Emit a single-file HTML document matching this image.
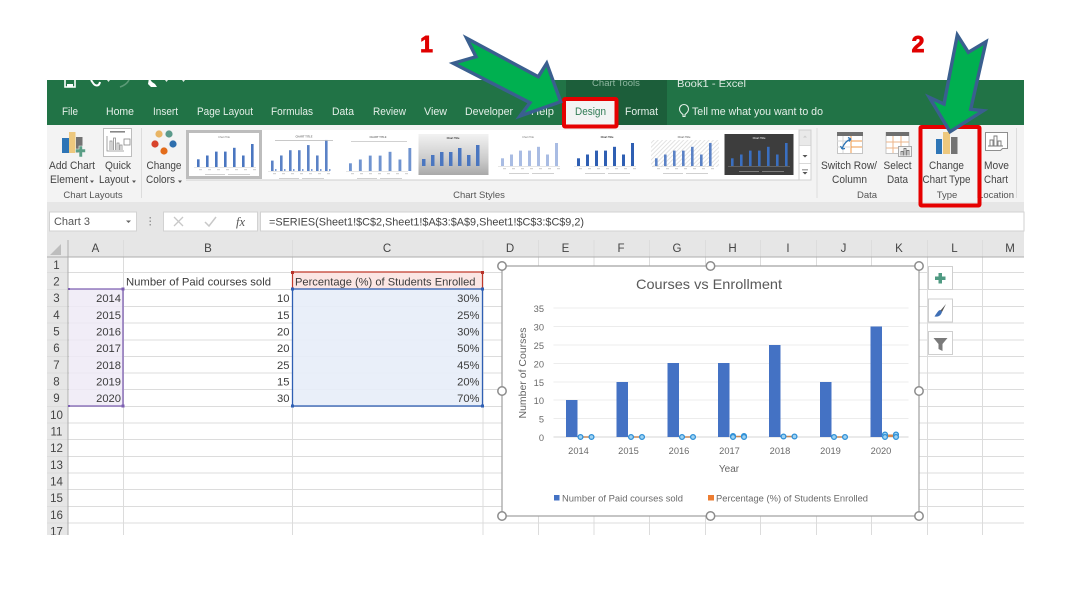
<!DOCTYPE html>
<html><head><meta charset="utf-8"><style>
html,body{margin:0;padding:0;background:#fff;width:1070px;height:593px;overflow:hidden}
svg{display:block;filter:blur(.35px)}
text{font-family:"Liberation Sans",sans-serif;fill:#444}
.t{font-size:11px;fill:#e4efe8}
.r{font-size:10.8px;fill:#444;text-anchor:middle}
.g{font-size:9.5px;fill:#555;text-anchor:middle}
.c{font-size:11.2px;fill:#3c3c3c}
.e{font-size:11.2px;fill:#3c3c3c;text-anchor:end}
.h{font-size:11.5px;fill:#444;text-anchor:middle}
.a{font-size:9.3px;fill:#6a6a6a;text-anchor:middle}
.ae{font-size:9.3px;fill:#6a6a6a;text-anchor:end}
.tiny{font-size:2.6px;fill:#777;text-anchor:middle}
</style></head><body>
<svg width="1070" height="593" viewBox="0 0 1070 593" xmlns="http://www.w3.org/2000/svg">
<defs>
<g id="b"><rect x="0" y="-7.7" width="2.6" height="7.7"/><rect x="9" y="-11.5" width="2.6" height="11.5"/><rect x="18" y="-15.4" width="2.6" height="15.4"/><rect x="27" y="-15.4" width="2.6" height="15.4"/><rect x="36" y="-19.2" width="2.6" height="19.2"/><rect x="45" y="-11.5" width="2.6" height="11.5"/><rect x="54" y="-23" width="2.6" height="23"/></g>
<g id="ln"><rect x="-3" y="0" width="62" height=".5" fill="#ccc"/><rect x="2" y="2.5" width="3" height=".6" fill="#aaa"/><rect x="11" y="2.5" width="3" height=".6" fill="#aaa"/><rect x="20" y="2.5" width="3" height=".6" fill="#aaa"/><rect x="29" y="2.5" width="3" height=".6" fill="#aaa"/><rect x="38" y="2.5" width="3" height=".6" fill="#aaa"/><rect x="47" y="2.5" width="3" height=".6" fill="#aaa"/><rect x="56" y="2.5" width="3" height=".6" fill="#aaa"/><rect x="8" y="7" width="20" height=".7" fill="#bbb"/><rect x="31" y="7" width="22" height=".7" fill="#bbb"/></g>
<pattern id="hat" width="3" height="3" patternUnits="userSpaceOnUse" patternTransform="rotate(45)"><rect width="3" height="3" fill="#fff"/><rect width="1" height="3" fill="#e2e2e2"/></pattern>
<linearGradient id="gy" x1="0" y1="0" x2="0" y2="1"><stop offset="0" stop-color="#f2f2f2"/><stop offset=".65" stop-color="#c9c9c9"/><stop offset="1" stop-color="#a9a9a9"/></linearGradient>
<clipPath id="top"><rect x="47" y="80" width="977" height="45"/></clipPath>
</defs>

<!-- title/tab band -->
<rect x="47" y="80" width="977" height="45" fill="#217346"/>
<rect x="566" y="80" width="101" height="45" fill="#1c5e3a"/>
<g clip-path="url(#top)">
<text x="616" y="86" font-size="9.5" text-anchor="middle" style="fill:#8fb7a0">Chart Tools</text>
<text x="677" y="87" font-size="10.5" style="fill:#dfeae3" textLength="69" lengthAdjust="spacingAndGlyphs">Book1  -  Excel</text>
<!-- QAT -->
<path d="M65 78h10v9h-10z" fill="none" stroke="#fff" stroke-width="1.6"/><rect x="67" y="84" width="6" height="3" fill="#fff"/>
<path d="M91 80l2 3c2 3 6 4 7-1" fill="none" stroke="#fff" stroke-width="2"/>
<path d="M120 87c3-1 7-3 9-7" fill="none" stroke="#5c9a77" stroke-width="1.6"/>
<path d="M149 78l3 4 3 2 2 3h-6l-3-3z" fill="#fff"/>
<path d="M107 80h3l-1.500 2zM165 80h3l-1.500 2zM185 80h-3l1.500 2z" fill="#dfeae3"/>
</g>
<!-- tabs -->
<text class="t" x="62" y="115" textLength="16" lengthAdjust="spacingAndGlyphs">File</text>
<text class="t" x="106" y="115" textLength="28" lengthAdjust="spacingAndGlyphs">Home</text>
<text class="t" x="153" y="115" textLength="25" lengthAdjust="spacingAndGlyphs">Insert</text>
<text class="t" x="197" y="115" textLength="56" lengthAdjust="spacingAndGlyphs">Page Layout</text>
<text class="t" x="271" y="115" textLength="42" lengthAdjust="spacingAndGlyphs">Formulas</text>
<text class="t" x="332" y="115" textLength="22" lengthAdjust="spacingAndGlyphs">Data</text>
<text class="t" x="373" y="115" textLength="33" lengthAdjust="spacingAndGlyphs">Review</text>
<text class="t" x="424" y="115" textLength="23" lengthAdjust="spacingAndGlyphs">View</text>
<text class="t" x="465" y="115" textLength="48" lengthAdjust="spacingAndGlyphs">Developer</text>
<text class="t" x="531" y="115" textLength="23" lengthAdjust="spacingAndGlyphs">Help</text>
<rect x="564" y="99" width="52" height="27" fill="#f3f3f3"/>
<text x="575" y="115" font-size="11" style="fill:#2f7a53" textLength="31" lengthAdjust="spacingAndGlyphs">Design</text>
<text class="t" x="625" y="115" textLength="33" lengthAdjust="spacingAndGlyphs">Format</text>
<path d="M683 116.500v-2c-2-1.500-3.500-3-3.500-5.500a4.500 4.500 0 0 1 9 0c0 2.500-1.500 4-3.500 5.500v2z" fill="none" stroke="#e4efe8" stroke-width="1.100"/>
<text class="t" x="692" y="115" textLength="131" lengthAdjust="spacingAndGlyphs">Tell me what you want to do</text>

<!-- ribbon -->
<rect x="47" y="125" width="977" height="77" fill="#f3f3f3"/>
<rect x="47" y="202" width="977" height="38" fill="#e6e6e6"/>
<rect x="141" y="128" width="1" height="70" fill="#dcdcdc"/>
<rect x="816.500" y="128" width="1" height="70" fill="#dcdcdc"/>
<rect x="977" y="128" width="1" height="70" fill="#dcdcdc"/>
<rect x="1016" y="128" width="1" height="70" fill="#dcdcdc"/>

<!-- add chart -->
<rect x="62" y="138" width="7" height="15" fill="#2e75b6"/><rect x="69" y="132" width="6.500" height="21" fill="#edc87e"/><rect x="76" y="137" width="6.500" height="16" fill="#737373"/>
<path d="M79 146h3.500v3h3v3.500h-3v4.500h-3.500v-4.500h-3.500v-3.500h3.500z" fill="#5a9e86" stroke="#f3f3f3" stroke-width=".6"/>
<text class="r" x="72" y="169" textLength="46" lengthAdjust="spacingAndGlyphs">Add Chart</text><text class="r" x="69" y="183" textLength="38" lengthAdjust="spacingAndGlyphs">Element</text><path d="M90 180.500h4l-2 2.500z" fill="#555"/>
<!-- quick layout -->
<rect x="103.500" y="128.500" width="28" height="28" fill="#fff" stroke="#bdbdbd"/>
<rect x="110" y="131" width="15" height="1.600" fill="#888"/>
<path d="M107 136v15h17M110 150v-9h2v9M113.500 150v-12h2v12M117 150v-7h2v7M120 150v-5h2v5" fill="none" stroke="#8c8c8c" stroke-width=".8"/>
<rect x="124" y="139" width="6" height="6" fill="#fff" stroke="#888" stroke-width=".8"/>
<text class="r" x="118" y="169" textLength="26" lengthAdjust="spacingAndGlyphs">Quick</text><text class="r" x="114" y="183" textLength="30" lengthAdjust="spacingAndGlyphs">Layout</text><path d="M132 180.500h4l-2 2.500z" fill="#555"/>
<!-- change colors -->
<circle cx="159" cy="134" r="3.600" fill="#e9b565"/><circle cx="169" cy="134" r="3.600" fill="#5b9a8b"/><circle cx="155" cy="144" r="3.600" fill="#d8432c"/><circle cx="173" cy="144" r="3.600" fill="#2e6fae"/><circle cx="164" cy="151" r="3.600" fill="#e36c1b"/>
<text class="r" x="164" y="169" textLength="35" lengthAdjust="spacingAndGlyphs">Change</text><text class="r" x="160.500" y="183" textLength="29" lengthAdjust="spacingAndGlyphs">Colors</text><path d="M178 180.500h4l-2 2.500z" fill="#555"/>

<!-- gallery -->
<rect x="186" y="130" width="625" height="50" fill="#fff"/>
<rect x="186" y="179.500" width="625" height="1" fill="#cfcfcf"/>
<rect x="187.500" y="131.500" width="73" height="46" fill="#fff" stroke="#bdbdbd" stroke-width="3"/>
<g transform="translate(197,167)" fill="#4a76c0"><use href="#b"/><use href="#ln"/></g>
<text class="tiny" x="224" y="138">Chart Title</text>
<g transform="translate(271,171)" fill="#5b82c6"><use href="#b" transform="scale(1,1.350)"/><use href="#ln"/></g>
<g transform="translate(275,171)" fill="#7d9cd4"><rect x="0" y="-2" width="1.500" height="2"/><rect x="9" y="-2" width="1.500" height="2"/><rect x="18" y="-2" width="1.500" height="2"/><rect x="27" y="-2" width="1.500" height="2"/><rect x="36" y="-2" width="1.500" height="2"/><rect x="45" y="-2" width="1.500" height="2"/><rect x="54" y="-2" width="1.500" height="2"/></g>
<text class="tiny" x="304" y="137.500" style="font-weight:bold">CHART TITLE</text><rect x="275" y="140" width="58" height=".8" fill="#bbb"/>
<g transform="translate(349,171)" fill="#6f93cf"><use href="#b" transform="scale(1.100,1)"/><use href="#ln"/></g>
<text class="tiny" x="378" y="138" style="font-weight:bold">CHART TITLE</text><rect x="351" y="141" width="56" height=".8" fill="#c6c6c6"/>
<rect x="418.500" y="134" width="70" height="41" fill="url(#gy)"/>
<g transform="translate(422,166)" fill="#4a76c0"><rect x="0" y="-7" width="3.500" height="7"/><rect x="9" y="-11" width="3.500" height="11"/><rect x="18" y="-14" width="3.500" height="14"/><rect x="27" y="-14" width="3.500" height="14"/><rect x="36" y="-18" width="3.500" height="18"/><rect x="45" y="-11" width="3.500" height="11"/><rect x="54" y="-21" width="3.500" height="21"/></g>
<text class="tiny" x="453" y="139" style="font-weight:bold;fill:#333">Chart Title</text>
<g transform="translate(501,166)" fill="#a9bce3"><rect x="0" y="-7.700" width="3" height="7.700"/><rect x="9" y="-11.500" width="3" height="11.500"/><rect x="18" y="-15.400" width="3" height="15.400"/><rect x="27" y="-15.400" width="3" height="15.400"/><rect x="36" y="-19.200" width="3" height="19.200"/><rect x="45" y="-11.500" width="3" height="11.500"/><rect x="54" y="-23" width="3" height="23"/><use href="#ln"/></g>
<text class="tiny" x="528" y="138">Chart Title</text>
<g transform="translate(577,166)" fill="#2f5fb3"><rect x="0" y="-7.700" width="3" height="7.700"/><rect x="9" y="-11.500" width="3" height="11.500"/><rect x="18" y="-15.400" width="3" height="15.400"/><rect x="27" y="-15.400" width="3" height="15.400"/><rect x="36" y="-19.200" width="3" height="19.200"/><rect x="45" y="-11.500" width="3" height="11.500"/><rect x="54" y="-23" width="3" height="23"/><use href="#ln"/></g>
<text class="tiny" x="607" y="138" style="font-weight:bold;fill:#333">Chart Title</text>
<rect x="651" y="140" width="68" height="27" fill="url(#hat)"/>
<g transform="translate(655,166)" fill="#5b82c6"><use href="#b"/><use href="#ln"/></g>
<text class="tiny" x="684" y="138" style="font-weight:bold">Chart Title</text>
<rect x="724.500" y="134" width="69" height="41" fill="#3d3d3d"/>
<g transform="translate(731,166)" fill="#3a6fc0"><use href="#b"/><rect x="-3" y="0" width="62" height=".5" fill="#888"/><rect x="8" y="5" width="20" height=".7" fill="#999"/><rect x="31" y="5" width="22" height=".7" fill="#999"/></g>
<text class="tiny" x="759" y="139" style="font-weight:bold;fill:#ddd">Chart Title</text>
<!-- scroller -->
<rect x="799" y="130" width="12" height="50" fill="#fff" stroke="#d0d0d0"/><rect x="799.500" y="130.500" width="11" height="15" fill="#e9e9e9"/>
<rect x="799" y="163" width="12" height=".8" fill="#d0d0d0"/><rect x="799" y="145" width="12" height=".8" fill="#d0d0d0"/>
<path d="M802.500 155h5l-2.500 2.500zM802 169.500h6v.8h-6zM802.500 172h5l-2.500 2.500z" fill="#555"/>
<path d="M803 137.500h4l-2-2z" fill="#ccc"/>

<!-- switch row -->
<rect x="837.500" y="132.500" width="25" height="21" fill="#fff" stroke="#c5c5c5"/><rect x="837" y="132" width="26" height="4" fill="#6f6f6f"/>
<path d="M851 136v17M851 141h11M851 147h11" stroke="#ef9a4a" fill="none"/><path d="M843 136v17M837 141h14M837 147h14" stroke="#d7d7d7" fill="none"/>
<path d="M842 149c1-3 3-8 9-10M851 139l-3-1.500M851 139l-2 2.500M842 149l-1.500-3M842 149l3-.5" fill="none" stroke="#2e75b6" stroke-width="1.300"/>
<text class="r" x="849" y="169" textLength="56" lengthAdjust="spacingAndGlyphs">Switch Row/</text><text class="r" x="849.500" y="183" textLength="35" lengthAdjust="spacingAndGlyphs">Column</text>
<!-- select data -->
<rect x="886" y="132.500" width="23" height="21" fill="#fff" stroke="#c5c5c5"/><rect x="886" y="132" width="23" height="4" fill="#6f6f6f"/>
<path d="M893 136v17M901 136v17M886 142h23M886 148h23" stroke="#ecb48a" fill="none"/>
<rect x="898.500" y="146.500" width="13" height="10" fill="#f3f3f3" stroke="#aaa"/><path d="M901 155.500v-4h2v4M904 155.500v-7h2v7M907 155.500v-5h2v5" fill="none" stroke="#777" stroke-width=".9"/>
<text class="r" x="897.500" y="169" textLength="28" lengthAdjust="spacingAndGlyphs">Select</text><text class="r" x="897.500" y="183" textLength="21" lengthAdjust="spacingAndGlyphs">Data</text>
<text class="g" x="867" y="198">Data</text>
<!-- change chart type -->
<rect x="936" y="139" width="6" height="15" fill="#2e75b6"/><rect x="943" y="132" width="7" height="22" fill="#edc87e"/><rect x="951" y="137" width="6.500" height="17" fill="#737373"/>
<text class="r" x="946.500" y="169" textLength="35" lengthAdjust="spacingAndGlyphs">Change</text><text class="r" x="946.500" y="183" textLength="48" lengthAdjust="spacingAndGlyphs">Chart Type</text>
<text class="g" x="947" y="198">Type</text>
<!-- move chart -->
<path d="M985.500 132.500h22v16h-5l-2 2h-15z" fill="#fff" stroke="#8e8e8e"/>
<path d="M990 146v-6h3v6M994 146v-10h3v10M998 146v-5h3v5M988 146h15" fill="none" stroke="#7a7a7a" stroke-width=".9"/>
<text class="r" x="996.500" y="169" textLength="25" lengthAdjust="spacingAndGlyphs">Move</text><text class="r" x="996" y="183" textLength="24" lengthAdjust="spacingAndGlyphs">Chart</text>
<text class="g" x="1014" y="198" style="text-anchor:end">Location</text>
<text class="g" x="93" y="198">Chart Layouts</text>
<text class="g" x="479" y="198">Chart Styles</text>

<!-- name box / formula -->
<rect x="49.500" y="212" width="87" height="19" fill="#fff" stroke="#d2d2d2"/>
<text x="54" y="225" font-size="11" style="fill:#555" textLength="36" lengthAdjust="spacingAndGlyphs">Chart 3</text>
<path d="M126 220.500h5l-2.500 2.500z" fill="#666"/>
<rect x="149.500" y="217" width="1.500" height="1.500" fill="#999"/><rect x="149.500" y="220.500" width="1.500" height="1.500" fill="#999"/><rect x="149.500" y="224" width="1.500" height="1.500" fill="#999"/>
<rect x="163.500" y="212" width="94" height="19" fill="#fff" stroke="#d2d2d2"/>
<path d="M174 217l9 9M183 217l-9 9" stroke="#c8c8c8" stroke-width="1.300" fill="none"/>
<path d="M205 222l4 4 7-9" stroke="#c8c8c8" stroke-width="1.500" fill="none"/>
<text x="236" y="226" font-size="12.500" font-style="italic" style="font-family:'Liberation Serif',serif;fill:#555">fx</text>
<rect x="260.500" y="212" width="763.500" height="19" fill="#fff" stroke="#d2d2d2"/>
<text x="269" y="225.500" font-size="11" style="fill:#444" textLength="315" lengthAdjust="spacingAndGlyphs">=SERIES(Sheet1!$C$2,Sheet1!$A$3:$A$9,Sheet1!$C$3:$C$9,2)</text>

<!-- sheet -->
<rect x="47" y="240" width="977" height="17" fill="#e6e6e6"/>
<rect x="47" y="257" width="21" height="278" fill="#e6e6e6"/>
<rect x="68" y="257" width="956" height="278" fill="#fff"/>
<path d="M50 255l11-11v11z" fill="#bdbdbd"/>
<g fill="#dcdcdc">
<rect x="47" y="272" width="977" height="1"/><rect x="47" y="289" width="977" height="1"/><rect x="47" y="306" width="977" height="1"/><rect x="47" y="322.500" width="977" height="1"/><rect x="47" y="339.500" width="977" height="1"/><rect x="47" y="356" width="977" height="1"/><rect x="47" y="372.500" width="977" height="1"/><rect x="47" y="389" width="977" height="1"/><rect x="47" y="406" width="977" height="1"/><rect x="47" y="422.500" width="977" height="1"/><rect x="47" y="439" width="977" height="1"/><rect x="47" y="456" width="977" height="1"/><rect x="47" y="472.500" width="977" height="1"/><rect x="47" y="489" width="977" height="1"/><rect x="47" y="506" width="977" height="1"/><rect x="47" y="522.500" width="977" height="1"/>
<rect x="123" y="240" width="1" height="295"/><rect x="292" y="240" width="1" height="295"/><rect x="482.500" y="240" width="1" height="295"/><rect x="538" y="240" width="1" height="295"/><rect x="593.500" y="240" width="1" height="295"/><rect x="649" y="240" width="1" height="295"/><rect x="705" y="240" width="1" height="295"/><rect x="760" y="240" width="1" height="295"/><rect x="816" y="240" width="1" height="295"/><rect x="871" y="240" width="1" height="295"/><rect x="927" y="240" width="1" height="295"/><rect x="982" y="240" width="1" height="295"/>
</g>
<rect x="47" y="256.500" width="977" height="1" fill="#adadad"/><rect x="67.500" y="240" width="1" height="295" fill="#adadad"/>
<text class="h" x="95.500" y="252">A</text><text class="h" x="208" y="252">B</text><text class="h" x="387" y="252">C</text><text class="h" x="510" y="252">D</text><text class="h" x="565.500" y="252">E</text><text class="h" x="621" y="252">F</text><text class="h" x="677" y="252">G</text><text class="h" x="732.500" y="252">H</text><text class="h" x="788" y="252">I</text><text class="h" x="843.500" y="252">J</text><text class="h" x="899" y="252">K</text><text class="h" x="954.500" y="252">L</text><text class="h" x="1010" y="252">M</text>
<text class="h" x="56.500" y="269">1</text><text class="h" x="56.500" y="285.500">2</text><text class="h" x="56.500" y="302">3</text><text class="h" x="56.500" y="319">4</text><text class="h" x="56.500" y="335.500">5</text><text class="h" x="56.500" y="352">6</text><text class="h" x="56.500" y="369">7</text><text class="h" x="56.500" y="385.500">8</text><text class="h" x="56.500" y="402">9</text><text class="h" x="56.500" y="419">10</text><text class="h" x="56.500" y="435.500">11</text><text class="h" x="56.500" y="452">12</text><text class="h" x="56.500" y="469">13</text><text class="h" x="56.500" y="485.500">14</text><text class="h" x="56.500" y="502">15</text><text class="h" x="56.500" y="519">16</text><text class="h" x="56.500" y="535.500">17</text>

<!-- selections -->
<rect x="69" y="289" width="54" height="117" fill="#eeeaf6" fill-opacity=".85"/>
<rect x="292" y="272" width="191" height="17" fill="#fbe6e4"/>
<rect x="292" y="289" width="191" height="117" fill="#e7edf8" fill-opacity=".9"/>
<path d="M69 289h54v117h-54" fill="none" stroke="#7d5fb2" stroke-width="1.300"/>
<path d="M292.500 289v-17h190v17" fill="none" stroke="#c0392b" stroke-width="1.200"/>
<rect x="292.500" y="289" width="190" height="117" fill="none" stroke="#2f5fb3" stroke-width="1.300"/>
<g fill="#7d5fb2"><rect x="68" y="288" width="2" height="2"/><rect x="121.500" y="287.500" width="3" height="3"/><rect x="68" y="405" width="2" height="2"/><rect x="121.500" y="404.500" width="3" height="3"/></g>
<g fill="#b8322a"><rect x="291" y="271" width="3" height="3"/><rect x="481" y="271" width="3" height="3"/></g>
<g fill="#2f5fb3"><rect x="291" y="287.500" width="3" height="3"/><rect x="481" y="287.500" width="3" height="3"/><rect x="291" y="404.500" width="3" height="3"/><rect x="481" y="404.500" width="3" height="3"/></g>

<text class="c" x="126" y="285.500" textLength="145" lengthAdjust="spacingAndGlyphs">Number of Paid courses sold</text>
<text class="c" x="295" y="285.500" textLength="180.500" lengthAdjust="spacingAndGlyphs">Percentage (%) of Students Enrolled</text>
<text class="e" x="121" y="302">2014</text><text class="e" x="121" y="319">2015</text><text class="e" x="121" y="335.500">2016</text><text class="e" x="121" y="352">2017</text><text class="e" x="121" y="369">2018</text><text class="e" x="121" y="385.500">2019</text><text class="e" x="121" y="402">2020</text>
<text class="e" x="289.500" y="302">10</text><text class="e" x="289.500" y="319">15</text><text class="e" x="289.500" y="335.500">20</text><text class="e" x="289.500" y="352">20</text><text class="e" x="289.500" y="369">25</text><text class="e" x="289.500" y="385.500">15</text><text class="e" x="289.500" y="402">30</text>
<text class="e" x="479.500" y="302">30%</text><text class="e" x="479.500" y="319">25%</text><text class="e" x="479.500" y="335.500">30%</text><text class="e" x="479.500" y="352">50%</text><text class="e" x="479.500" y="369">45%</text><text class="e" x="479.500" y="385.500">20%</text><text class="e" x="479.500" y="402">70%</text>

<!-- chart -->
<rect x="502" y="266" width="417" height="250" fill="#fff" stroke="#a6a6a6" stroke-width="1.300"/>
<text x="709" y="289" font-size="14" text-anchor="middle" style="fill:#595959" textLength="146" lengthAdjust="spacingAndGlyphs">Courses vs Enrollment</text>
<g fill="#ececec"><rect x="553.500" y="307.500" width="355" height="1"/><rect x="553.500" y="326" width="355" height="1"/><rect x="553.500" y="344.500" width="355" height="1"/><rect x="553.500" y="363" width="355" height="1"/><rect x="553.500" y="381.500" width="355" height="1"/><rect x="553.500" y="399.500" width="355" height="1"/><rect x="553.500" y="418" width="355" height="1"/></g>
<rect x="553.500" y="436.500" width="355" height="1" fill="#d4d4d4"/>
<text class="ae" x="544" y="312">35</text><text class="ae" x="544" y="330.500">30</text><text class="ae" x="544" y="349">25</text><text class="ae" x="544" y="367.500">20</text><text class="ae" x="544" y="386">15</text><text class="ae" x="544" y="404">10</text><text class="ae" x="544" y="422.500">5</text><text class="ae" x="544" y="441">0</text>
<text x="0" y="0" font-size="10" text-anchor="middle" transform="translate(526,373) rotate(-90)" style="fill:#666" textLength="91" lengthAdjust="spacingAndGlyphs">Number of Courses</text>
<g fill="#4472c4">
<rect x="566" y="400" width="11.500" height="37"/><rect x="616.500" y="382" width="11.500" height="55"/><rect x="667.500" y="363" width="11.500" height="74"/><rect x="718" y="363" width="11.500" height="74"/><rect x="769" y="345" width="11.500" height="92"/><rect x="820" y="382" width="11.500" height="55"/><rect x="870.500" y="326.500" width="11.500" height="110.500"/>
</g>
<g stroke="#c98a5a" stroke-width="1.500" fill="none"><path d="M580.500 437h11M631 437h11M682 437h11M733 436.500h11M783.500 436.500h11M834 437h11M885 436h11"/></g>
<rect x="885" y="434.500" width="11" height="2.500" fill="#d98a52"/>
<g fill="#9ed2f2" stroke="#2f8fd6" stroke-width="1.300">
<circle cx="580.500" cy="437" r="2.400"/><circle cx="591.500" cy="437" r="2.400"/><circle cx="631" cy="437" r="2.400"/><circle cx="642" cy="437" r="2.400"/><circle cx="682" cy="437" r="2.400"/><circle cx="693" cy="437" r="2.400"/><circle cx="733" cy="436" r="2.400"/><circle cx="733" cy="437" r="2.400"/><circle cx="744" cy="436" r="2.400"/><circle cx="744" cy="437" r="2.400"/><circle cx="783.500" cy="436.500" r="2.400"/><circle cx="794.500" cy="436.500" r="2.400"/><circle cx="834" cy="437" r="2.400"/><circle cx="845" cy="437" r="2.400"/><circle cx="885" cy="434.500" r="2.400"/><circle cx="885" cy="437" r="2.400"/><circle cx="896" cy="434.500" r="2.400"/><circle cx="896" cy="437" r="2.400"/>
</g>
<text class="a" x="578.500" y="454">2014</text><text class="a" x="628.500" y="454">2015</text><text class="a" x="679" y="454">2016</text><text class="a" x="729.500" y="454">2017</text><text class="a" x="780" y="454">2018</text><text class="a" x="830.500" y="454">2019</text><text class="a" x="881" y="454">2020</text>
<text x="729" y="472" font-size="10" text-anchor="middle" style="fill:#666">Year</text>
<rect x="554" y="495" width="5.500" height="5.500" fill="#4472c4"/>
<text x="562" y="501.500" font-size="9" style="fill:#6a6a6a" textLength="121" lengthAdjust="spacingAndGlyphs">Number of Paid courses sold</text>
<rect x="708" y="495" width="6" height="5.500" fill="#ed7d31"/>
<text x="716" y="501.500" font-size="9" style="fill:#6a6a6a" textLength="152" lengthAdjust="spacingAndGlyphs">Percentage (%) of Students Enrolled</text>
<g fill="#fff" stroke="#8c8c8c" stroke-width="1.500">
<circle cx="502" cy="266" r="4.200"/><circle cx="710.500" cy="266" r="4.200"/><circle cx="919" cy="266" r="4.200"/><circle cx="502" cy="391" r="4.200"/><circle cx="919" cy="391" r="4.200"/><circle cx="502" cy="516" r="4.200"/><circle cx="710.500" cy="516" r="4.200"/><circle cx="919" cy="516" r="4.200"/>
</g>
<!-- chart side buttons -->
<g fill="#fff" stroke="#cfcfcf"><rect x="928.500" y="266.500" width="24" height="23"/><rect x="928.500" y="299" width="24" height="23"/><rect x="928.500" y="331.500" width="24" height="23"/></g>
<path d="M938.500 273h3.500v3.500h3.500v3.500h-3.500v3.500h-3.500v-3.500h-3.500v-3.500h3.500z" fill="#4f9a82"/>
<path d="M946 304l-5.500 6.500 1.500 1.500z" fill="#555"/><path d="M940.500 310c-2 0-3 2-6 6.500 3 .5 6 0 7.500-4.500z" fill="#3f6fb5"/>
<path d="M933.500 338h14l-5 6v7l-4-2v-5z" fill="#7a7a7a"/>

<!-- red boxes -->
<rect x="564" y="99" width="52.500" height="27.500" fill="none" stroke="#e60000" stroke-width="4" rx="1"/>
<rect x="920.500" y="127" width="59" height="78.500" fill="none" stroke="#e60000" stroke-width="4" rx="1"/>

<!-- arrows -->
<polygon points="466.700,38.300 538.300,76.700 546.700,63.300 560.700,101.700 520,116 530,102.700 453.300,63.300 476,56.700" fill="#00b050" stroke="#3a5f8f" stroke-width="3.400" stroke-linejoin="miter"/>
<polygon points="957.300,35 968.300,52.300 986,41.700 970.700,109.300 983.300,110.700 950,131.700 929.300,97.300 944,104" fill="#00b050" stroke="#3a5f8f" stroke-width="3.400" stroke-linejoin="miter"/>

<!-- numbers -->
<text x="426.500" y="52" font-size="23" font-weight="bold" text-anchor="middle" style="fill:#e00000;stroke:#e00000;stroke-width:.9">1</text>
<text x="918" y="52" font-size="23" font-weight="bold" text-anchor="middle" style="fill:#e00000;stroke:#e00000;stroke-width:.9">2</text>

<!-- clip overflow -->
<rect x="47" y="535" width="977" height="58" fill="#fff"/>
</svg>
</body></html>
